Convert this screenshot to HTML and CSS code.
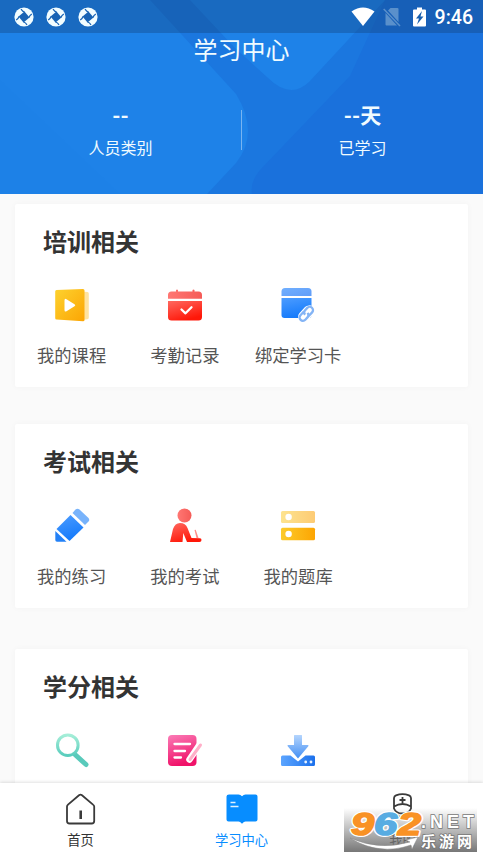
FILE: index.html
```html
<!DOCTYPE html>
<html lang="zh-CN">
<head>
<meta charset="utf-8">
<title>学习中心</title>
<link rel="stylesheet" href="styles.css">
</head>
<body>
<svg class="defs" width="0" height="0" aria-hidden="true">
  <defs>
    <linearGradient id="yellow" x1="0" y1="0" x2="1" y2="1"><stop offset="0" stop-color="#fdd22f"/><stop offset="1" stop-color="#fca503"/></linearGradient>
    <linearGradient id="yellowH"><stop offset="0" stop-color="#fccb2b"/><stop offset="1" stop-color="#fda502"/></linearGradient>
    <linearGradient id="paleH"><stop offset="0" stop-color="#fde38f"/><stop offset="1" stop-color="#fdcb74"/></linearGradient>
    <linearGradient id="red" x1="0" y1="0" x2=".5" y2="1"><stop offset="0" stop-color="#ff6960"/><stop offset="1" stop-color="#ff1708"/></linearGradient>
    <linearGradient id="redPale"><stop offset="0" stop-color="#ff7773"/><stop offset="1" stop-color="#f55b57"/></linearGradient>
    <linearGradient id="blue" x1="0" y1="0" x2=".3" y2="1"><stop offset="0" stop-color="#4c9cff"/><stop offset="1" stop-color="#167bfb"/></linearGradient>
    <linearGradient id="bluePale" x1="0" y1="0" x2="1" y2="1"><stop offset="0" stop-color="#70afff"/><stop offset="1" stop-color="#619df8"/></linearGradient>
    <linearGradient id="arrow" x1="0" y1="0" x2="0" y2="1"><stop offset="0" stop-color="#b5d5fd"/><stop offset="1" stop-color="#438ff4"/></linearGradient>
    <linearGradient id="drive"><stop offset="0" stop-color="#5ca5ff"/><stop offset="1" stop-color="#1b70ec"/></linearGradient>
    <linearGradient id="mint" x1="0" y1="0" x2="0" y2="1"><stop offset="0" stop-color="#a5eed8"/><stop offset="1" stop-color="#5acdbd"/></linearGradient>
    <linearGradient id="pink" x1="0" y1="0" x2=".3" y2="1"><stop offset="0" stop-color="#fb7cb7"/><stop offset="1" stop-color="#f01269"/></linearGradient>
    <linearGradient id="shade" x1="0" y1="0" x2="0" y2="1"><stop offset="0" stop-color="#777" stop-opacity="0"/><stop offset="1" stop-color="#777"/></linearGradient>
    <g id="swirl">
      <circle cx="10" cy="10" r="9.600" fill="#f2fdff"/>
      <path d="M10.500 4.500 15.500 10.500 9.500 15.500 4.500 9.500z" fill="#1863b4"/>
      <path d="M10.500 5Q8.500 4.500 7 2.200M15 10.500Q15.500 8.500 17.800 7M9.500 15Q11.500 15.500 13 17.800M5 9.500Q4.500 11.500 2.200 13" fill="none" stroke="#1863b4" stroke-width="1.200"/>
    </g>
  </defs>
</svg>

<div class="screen">
  <header class="hero">
    <svg class="hero-bg" viewBox="0 0 483 194" preserveAspectRatio="none" aria-hidden="true">
      <rect width="483" height="194" fill="#1b77df"/>
      <path d="M0 0H150L236 94Q260 133 236 163L207 194H0z" fill="#1e82e8"/>
      <path d="M190 0H385L309 82Q290 100 267 77L235 48z" fill="#1e82e8"/>
      <path d="M385 0H483V194H252Q250 182 260 170L350 76Z" fill="#1a71dc"/>
      <path d="M0 80 120 194H0z" fill="#1b7de5" opacity=".2"/>
    </svg>
    <div class="status">
      <div class="status-left">
        <svg width="20" height="20"><use href="#swirl"/></svg>
        <svg width="20" height="20"><use href="#swirl"/></svg>
        <svg width="20" height="20"><use href="#swirl"/></svg>
      </div>
      <div class="status-right">
        <svg width="24" height="20" viewBox="0 0 24 20"><path d="M.5 4.500Q12-3.500 23.500 4.500L12 19z" fill="#fff"/></svg>
        <svg class="sim" width="18" height="20" viewBox="0 0 18 20"><path d="M7.500 1h7q1 0 1 1v13L5 3.500zM2.500 6 14 18.500H3.500q-1 0-1-1z" fill="#5a90cb"/><path d="M.7 2 17 19" stroke="#5a90cb" stroke-width="1.500"/></svg>
        <svg class="battery" width="13" height="20" viewBox="0 0 13 20"><path d="M4 .5h5v2h3q1 0 1 1v15q0 1-1 1H1q-1 0-1-1v-15q0-1 1-1h3z" fill="#fff"/><path d="M9 4 3 11.500h3L4 17.500 10.500 9.500H7.500z" fill="#175eae"/></svg>
        <span class="clock">9:46</span>
      </div>
    </div>
    <h1>学习中心</h1>
    <div class="stats">
      <div class="stat"><strong>--</strong><span>人员类别</span></div>
      <div class="divider"></div>
      <div class="stat"><strong>--天</strong><span>已学习</span></div>
    </div>
  </header>

  <main>
    <section class="card">
      <h2>培训相关</h2>
      <div class="grid">
        <div class="item">
          <svg class="icon" viewBox="0 0 40 40"><path d="M30 6.500 35.500 7q1.300 0 1.300 1.500v24q0 1.500-1.300 1.700L30 35z" fill="#ffe3a0"/><path d="M4.500 5 31 4q1.500 0 1.500 1.500v29.500q0 1.300-1.500 1.300L4.500 34.500q-1.300 0-1.300-1.500V6.500Q3.200 5 4.500 5z" fill="url(#yellow)"/><path d="M12.500 15.500q0-2.500 2-1.300l8 5q1.600 1 0 2l-8 5q-2 1-2-1.200z" fill="#fff"/></svg>
          <span>我的课程</span>
        </div>
        <div class="item">
          <svg class="icon" viewBox="0 0 40 40"><path d="M3 13.800V10q0-3.500 3.500-3.500H11V5q1-1 2 0v1.500h14.500V5q1-1 2 0v1.500h4q3.500 0 3.500 3.500v3.800z" fill="url(#redPale)"/><path d="M3 16h34v16q0 3.500-3.500 3.500h-27Q3 35.500 3 32z" fill="url(#red)"/><path d="m16.500 24.500 4 3.800 6-6" fill="none" stroke="#fff" stroke-width="2.300" stroke-linecap="round" stroke-linejoin="round"/></svg>
          <span>考勤记录</span>
        </div>
        <div class="item">
          <svg class="icon" viewBox="0 0 40 40"><path d="M3.500 11V6.500Q3.500 3 7 3h23q3.500 0 3.500 3.500V11z" fill="url(#bluePale)"/><path d="M3.500 13h30v17q0 3-3 3h-24q-3 0-3-3z" fill="url(#blue)"/><g transform="translate(28.300 28.800) rotate(-47)" fill="none"><rect x="-8" y="-4" width="16" height="8" rx="4" fill="#fff" stroke="#fff" stroke-width="3"/><path d="M0-3.300H-5a3.300 3.300 0 0 0 0 6.600h3.500q2.500 0 3-3M0 3.300H5a3.300 3.300 0 0 0 0-6.600H1.500q-2.500 0-3 3" stroke="#84b4f5" stroke-width="2.300"/></g></svg>
          <span>绑定学习卡</span>
        </div>
      </div>
    </section>

    <section class="card">
      <h2>考试相关</h2>
      <div class="grid">
        <div class="item">
          <svg class="icon" viewBox="0 0 40 40"><path d="M23.500 4.500q2-1.700 4 0l9 8.500q1.500 2 0 3.500L33 20 20.500 8z" fill="#78b3fb"/><path d="M18.500 10 31.500 22.500 17.500 36 4.500 24z" fill="url(#blue)"/><path d="M3.300 26 14.500 36.700H5q-1.700 0-1.700-1.700z" fill="#2381f7"/></svg>
          <span>我的练习</span>
        </div>
        <div class="item">
          <svg class="icon" viewBox="0 0 40 40"><circle cx="19.500" cy="10.500" r="7" fill="url(#redPale)"/><path d="M5 37 8 24Q10 18 15 18q5.500 0 7.500 5l4 10 8.500.3q1.500.2 1.500 1.700 0 2-2 2H22L18.300 28 17.500 37z" fill="url(#red)"/><path d="m29.500 25 1.200-.3L33.500 33h-2z" fill="#ff8d87"/></svg>
          <span>我的考试</span>
        </div>
        <div class="item">
          <svg class="icon" viewBox="0 0 40 40"><rect x="3" y="6" width="34" height="12" rx="1.500" fill="url(#paleH)"/><rect x="3" y="22.700" width="34" height="12.500" rx="1.500" fill="url(#yellowH)"/><circle cx="10.600" cy="12" r="3.200" fill="#fff"/><circle cx="10.600" cy="29" r="3.200" fill="#fff"/></svg>
          <span>我的题库</span>
        </div>
      </div>
    </section>

    <section class="card">
      <h2>学分相关</h2>
      <div class="grid">
        <div class="item">
          <svg class="icon" viewBox="0 0 40 40"><path d="m23.500 25 10.500 9.500" stroke="#59cabb" stroke-width="5" stroke-linecap="round"/><circle cx="15.800" cy="15.200" r="10.300" fill="#fff" stroke="url(#mint)" stroke-width="3"/></svg>
        </div>
        <div class="item">
          <svg class="icon" viewBox="0 0 40 40"><rect x="3" y="5" width="28.500" height="31" rx="4" fill="url(#pink)"/><path d="M9.500 14h15.500M9.500 21H20M9.500 27.500H16" stroke="#fff" stroke-width="2.300" stroke-linecap="round"/><path d="M24.500 29.500 34 15.500" stroke="#fff" stroke-width="6.500" stroke-linecap="round"/><path d="M25 29.500 35.500 15" stroke="#ffafc8" stroke-width="3" stroke-linecap="round"/></svg>
        </div>
        <div class="item">
          <svg class="icon" viewBox="0 0 40 40"><path d="M4.500 25.500h8L20 31.500l7.500-6h8Q37 25.500 37 27v7.500q0 1.500-1.500 1.500h-31Q3 36 3 34.500V27q0-1.500 1.500-1.500z" fill="url(#drive)"/><path d="M16 5.500q0-.5.500-.5h7q.5 0 .5.500V15h6q1 .2.300 1.200L20 28.500 9.700 16.200q-.7-1 .3-1.200h6z" fill="url(#arrow)"/><circle cx="27.700" cy="32" r="1.400" fill="#e8f3ff"/><circle cx="33" cy="32" r="1.400" fill="#e8f3ff"/></svg>
        </div>
      </div>
    </section>
  </main>

  <nav class="tabs">
    <div class="tab">
      <svg width="34" height="34" viewBox="0 0 34 34" fill="none" stroke="#3a3a3a"><path d="M3 14.500Q3 13.500 4 12.600L15 3.200Q16.500 2 18 3.200L29 12.600Q30.200 13.500 30.200 14.500V29q0 2.500-2.500 2.500H5.500Q3 31.500 3 29z" stroke-width="1.800"/><path d="M16.700 18.500v8.500" stroke-width="2.600"/></svg>
      <span>首页</span>
    </div>
    <div class="tab active">
      <svg width="34" height="34" viewBox="0 0 34 34"><path d="M4 2.500h9.500q2 0 3.500 1.700 1.500-1.700 3.500-1.700h10q2 0 2 2v23q0 2-2 2h-10q-1.500 0-3.500 2.200Q15 29.500 13.500 29.500H3.500q-2 0-2-2v-23q0-2 2.500-2z" fill="#078dff"/><path d="M5.500 10.500h5M5.500 14.500h8" stroke="#dff2ff" stroke-width="1.300"/></svg>
      <span>学习中心</span>
    </div>
    <div class="tab">
      <svg width="34" height="34" viewBox="0 0 34 34" fill="none" stroke="#3a3a3a" stroke-width="1.800"><path d="M8 14.500V6q.2-2 2-2.700 6.500-2.500 13 0 1.800.7 2 2.700v8.500q-8.500-5-17 0v2q2 5 8.500 5t8.500-5v-2M3 32q0-8 8-9l5.500 4 5.500-4q8 1 8 9"/><path d="M16.500 5v6M13.500 8h6"/></svg>
      <span>我的</span>
    </div>
  </nav>

  <svg class="watermark" viewBox="0 0 133 44" width="133" height="44">
    <rect width="133" height="44" fill="url(#shade)"/>
    <g class="digits" stroke="#fff" stroke-width="4" stroke-linejoin="round">
      <text x="7" y="27" textLength="23" lengthAdjust="spacingAndGlyphs">9</text>
      <text x="30" y="27" textLength="23" lengthAdjust="spacingAndGlyphs">6</text>
      <text x="54" y="27" textLength="23" lengthAdjust="spacingAndGlyphs">2</text>
    </g>
    <g class="digits" stroke-width="1.700" stroke-linejoin="round" aria-hidden="true">
      <text x="7" y="27" textLength="23" lengthAdjust="spacingAndGlyphs" fill="#f99225" stroke="#f99225">9</text>
      <text x="30" y="27" textLength="23" lengthAdjust="spacingAndGlyphs" fill="#58ace2" stroke="#58ace2">6</text>
      <text x="54" y="27" textLength="23" lengthAdjust="spacingAndGlyphs" fill="#f99225" stroke="#f99225">2</text>
    </g>
    <path d="M6 30Q35 43 66 34l-4-2 12-3-6 12-1-4Q35 48 6 30z" fill="#fff" stroke="#888" stroke-width=".5"/>
    <g fill="#fff" stroke="#777" stroke-width="1.500" paint-order="stroke">
      <text class="net" x="77" y="20" textLength="53">.NET</text>
      <text class="site" x="77" y="38.500" textLength="51">乐游网</text>
    </g>
  </svg>
</div>
</body>
</html>
```
FILE: styles.css
```css
* { box-sizing: border-box; }

body {
  margin: 0;
  overflow: hidden;
  font-family: Roboto, "Noto Sans CJK SC", sans-serif;
  background: #fafafa;
}

.defs { position: absolute; }

.screen {
  position: relative;
  display: flex;
  flex-direction: column;
  width: 483px;
  height: 858px;
  overflow: hidden;
}

.hero {
  position: relative;
  flex: none;
  height: 194px;
  color: #f0fbff;
}

.hero-bg {
  position: absolute;
  inset: 0;
  z-index: -1;
  width: 100%;
  height: 100%;
}

.status {
  display: flex;
  justify-content: space-between;
  align-items: center;
  height: 33px;
  padding: 0 10px 0 14px;
  background: rgba(16, 53, 99, .3);
}

.status-left { display: flex; gap: 12px; }
.status-right { display: flex; align-items: center; color: #fff; }
.sim { margin-left: 8px; }
.battery { margin-left: 12px; }

.clock {
  margin-left: 9px;
  padding-top: 2px;
  font-size: 19.500px;
  font-weight: 500;
  line-height: 33px;
}

h1 {
  margin: 0;
  font-size: 24px;
  font-weight: 400;
  line-height: 36px;
  text-align: center;
}

.stats {
  display: flex;
  align-items: center;
  height: 122px;
}

.stat {
  display: flex;
  flex: 1;
  flex-direction: column;
  align-items: center;
  padding-top: 2px;
}

.stat strong {
  font-size: 21px;
  font-weight: 700;
  line-height: 30px;
}

.stat span {
  margin-top: 6px;
  font-size: 16px;
  line-height: 24px;
}

.divider {
  width: 1px;
  height: 40px;
  background: rgba(255, 255, 255, .4);
}

main {
  display: flex;
  flex: 1;
  flex-direction: column;
  min-height: 0;
  overflow: hidden;
  padding: 10px 15px 0;
}

.card {
  flex: none;
  height: 183px;
  margin-bottom: 37px;
  border-radius: 2px;
  background: #fff;
  box-shadow: 0 0 6px rgba(0, 0, 0, .035);
}

.card:nth-child(2) { height: 184px; margin-bottom: 41px; }

h2 {
  margin: 0;
  padding: 21px 28px 0;
  color: #333;
  font-size: 24px;
  font-weight: 700;
  line-height: 36px;
}

.grid {
  display: grid;
  grid-template-columns: repeat(4, 1fr);
  padding-top: 24px;
}

.item {
  display: flex;
  flex-direction: column;
  align-items: center;
}

.icon { width: 40px; height: 40px; }

.item span {
  margin-top: 18px;
  color: #555;
  font-size: 17.3px;
  line-height: 26px;
  white-space: nowrap;
}

.card:nth-child(2) .item span { margin-top: 19px; }

.tabs {
  position: relative;
  display: grid;
  flex: none;
  grid-template-columns: repeat(3, 1fr);
  height: 75px;
  background: #fff;
  box-shadow: 0 -1px 3px rgba(0, 0, 0, .12);
}

.tab {
  display: flex;
  flex-direction: column;
  align-items: center;
  padding-top: 9px;
  color: #333;
  font-size: 13.3px;
  line-height: 20px;
}

.tab span { margin-top: 5px; }
.active { color: #078dff; }

.watermark {
  position: absolute;
  right: 6px;
  bottom: 6px;
}

.digits {
  font: italic 700 32px "Liberation Sans", sans-serif;
}

.net { font: 700 18px "Liberation Sans", sans-serif; }
.site { font: 700 15px "Noto Sans CJK SC", sans-serif; }
```
